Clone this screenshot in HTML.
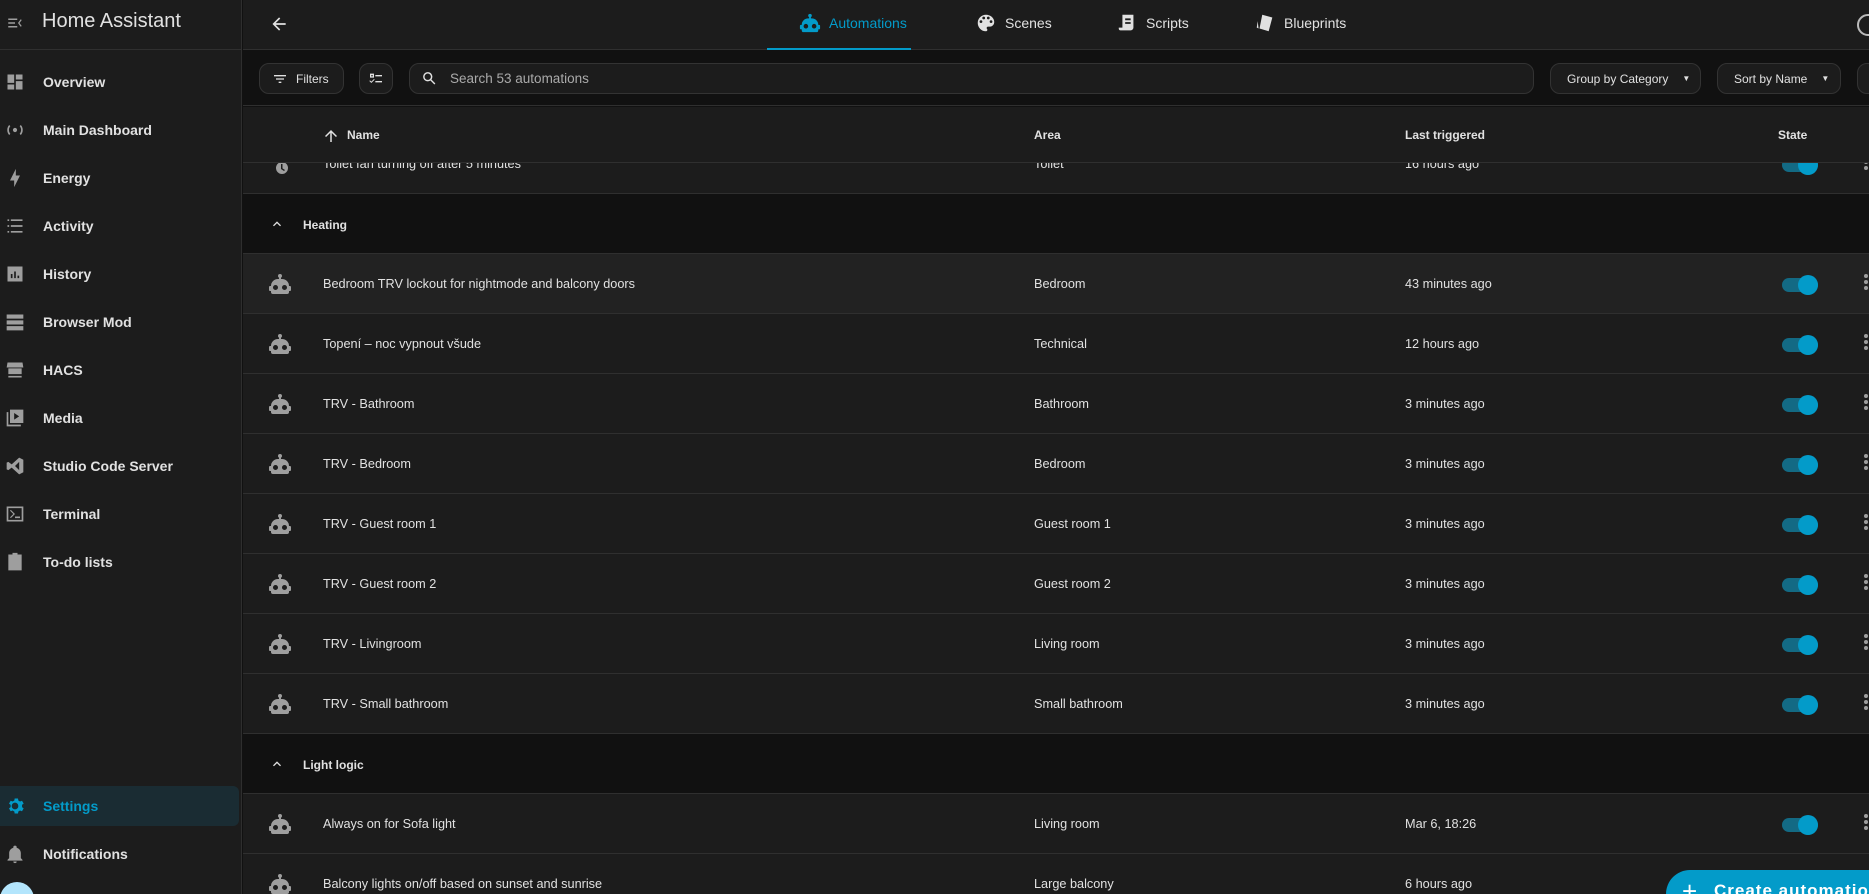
<!DOCTYPE html>
<html style="overflow:hidden;width:1869px;height:894px"><head><meta charset="utf-8"><style>
*{box-sizing:border-box;margin:0;padding:0}
html,body{width:1869px;height:894px;overflow:hidden;background:#111}
#wrap{position:relative;width:1869px;height:894px;overflow:hidden;font-family:"Liberation Sans",sans-serif;color:#e1e1e1;background:#111}
.abs{position:absolute}
#side{left:0;top:0;width:242px;height:894px;background:#1c1c1c;border-right:1px solid #2e2e2e}
.si{position:absolute;left:0;width:240px;height:40px;display:flex;align-items:center;font-size:14px;font-weight:bold;color:#e1e1e1}
.si svg{position:absolute;left:5px;width:20px;height:20px;fill:#9e9e9e}
.si span{position:absolute;left:43px}
#top{left:243px;top:0;width:1626px;height:50px;background:#1c1c1c;border-bottom:1px solid #2f2f2f}
.tab{position:absolute;top:12px;font-size:14px;color:#e1e1e1;display:flex;align-items:center;gap:8px}
.tab svg{width:22px;height:22px;fill:#e1e1e1}
.btn{position:absolute;top:63px;height:31px;border:1px solid #333;border-radius:10px;background:#1c1c1c;font-size:12px;color:#e1e1e1;display:flex;align-items:center}
.row{position:absolute;left:243px;width:1626px;height:60px;background:#1c1c1c;border-bottom:1px solid #2f2f2f;font-size:12.7px;color:#e1e1e1}
.row>*{position:absolute;top:23px}
.row .ic{left:25px;top:18px;width:24px;height:24px;fill:#9e9e9e}
.grp{position:absolute;left:243px;width:1626px;height:60px;background:#111;border-bottom:1px solid #2f2f2f;font-size:12px;font-weight:bold}
.tg{position:absolute;left:1539px;top:24px;width:36px;height:14px;border-radius:7px;background:#136a84}
.tg::after{content:"";position:absolute;left:16px;top:-3px;width:20px;height:20px;border-radius:50%;background:#039bc9}
.kb{position:absolute;left:1621px;top:20px;width:4px}
.kb i{display:block;width:4px;height:4px;border-radius:50%;background:#9e9e9e;margin-bottom:2px}
</style></head><body><div id="wrap">
<div id="side" class="abs">
 <div class="abs" style="left:0;top:0;width:242px;height:50px;border-bottom:1px solid #2f2f2f"></div>
 <svg class="abs" style="left:6px;top:14px;width:18px;height:18px" viewBox="0 0 24 24" fill="#9e9e9e"><path d="M3 6h12v2H3zM3 11h9v2H3zM3 16h12v2H3zM21 8l-3 4 3 4-1.4 1L16 12l3.6-5z"/></svg>
 <div class="abs" style="left:42px;top:10px;font-size:20px;color:#e1e1e1">Home Assistant</div>
 <div class="si" style="top:62px"><svg viewBox="0 0 24 24"><path d="M3 3h8v10H3zM13 3h8v6h-8zM13 11h8v10h-8zM3 15h8v6H3z"/></svg><span>Overview</span></div>
 <div class="si" style="top:110px"><svg viewBox="0 0 24 24"><circle cx="12" cy="12" r="2.5"/><path d="M5 6a9 9 0 0 0 0 12l1.4-1.4a7 7 0 0 1 0-9.2zM19 6l-1.4 1.4a7 7 0 0 1 0 9.2L19 18a9 9 0 0 0 0-12z"/></svg><span>Main Dashboard</span></div>
 <div class="si" style="top:158px"><svg viewBox="0 0 24 24"><path d="M11 15H6l7-14v8h5l-7 14z"/></svg><span>Energy</span></div>
 <div class="si" style="top:206px"><svg viewBox="0 0 24 24"><path d="M3 4h2v2H3zM7 4h14v2H7zM3 11h2v2H3zM7 11h14v2H7zM3 18h2v2H3zM7 18h14v2H7z"/></svg><span>Activity</span></div>
 <div class="si" style="top:254px"><svg viewBox="0 0 24 24"><path d="M3 3h18v18H3zM7 12v5h2v-5zM11 9v8h2V9zM15 14v3h2v-3z"/></svg><span>History</span></div>
 <div class="si" style="top:302px"><svg viewBox="0 0 24 24"><path d="M2 3h20v5H2zM2 10h20v5H2zM2 17h20v5H2z"/></svg><span>Browser Mod</span></div>
 <div class="si" style="top:350px"><svg viewBox="0 0 24 24"><path d="M3 3h18l1 6H2zM4 10h16v7H4zM4 19h16v2H4z"/></svg><span>HACS</span></div>
 <div class="si" style="top:398px"><svg viewBox="0 0 24 24"><path d="M2 5h2v15h15v2H2zM6 2h16v16H6zM11 6v8l6-4z"/></svg><span>Media</span></div>
 <div class="si" style="top:446px"><svg viewBox="0 0 24 24"><path d="M17 2l5 2.5v15L17 22l-9-8-4 3-2-1V8l2-1 4 3zM17 7l-5 5 5 5z"/></svg><span>Studio Code Server</span></div>
 <div class="si" style="top:494px"><svg viewBox="0 0 24 24"><path d="M2 3h20v18H2zM4 5v14h16V5zM6 8l4 4-4 4 1 1 5-5-5-5zM12 15h6v2h-6z"/></svg><span>Terminal</span></div>
 <div class="si" style="top:542px"><svg viewBox="0 0 24 24"><path d="M4 3h16v19H4zM9 1h6v4H9zM7 9h2v2H7zM11 9h6v2h-6zM7 14h2v2H7zM11 14h6v2h-6z"/></svg><span>To-do lists</span></div>
 <div class="abs" style="left:0;top:786px;width:239px;height:40px;background:#1a2c33;border-radius:0 6px 6px 0"></div>
 <div class="si" style="top:786px;color:#039bc9"><svg viewBox="0 0 24 24" style="fill:#039bc9"><path d="M12 8a4 4 0 1 0 0 8 4 4 0 0 0 0-8zm8.4 5.3l2 1.6-2 3.4-2.4-.9a8 8 0 0 1-2 1.2L15.6 21h-4l-.4-2.4a8 8 0 0 1-2-1.2l-2.4.9-2-3.4 2-1.6a8 8 0 0 1 0-2.6l-2-1.6 2-3.4 2.4.9a8 8 0 0 1 2-1.2L11.6 3h4l.4 2.4a8 8 0 0 1 2 1.2l2.4-.9 2 3.4-2 1.6a8 8 0 0 1 0 2.6z"/></svg><span>Settings</span></div>
 <div class="si" style="top:834px"><svg viewBox="0 0 24 24"><path d="M21 19v1H3v-1l2-2v-6c0-3 2-5.7 5-6.5V4a2 2 0 0 1 4 0v.5c3 .8 5 3.5 5 6.5v6zM14 21a2 2 0 0 1-4 0z"/></svg><span>Notifications</span></div>
 <div class="abs" style="left:0;top:882px;width:34px;height:34px;border-radius:50%;background:#b3e5fc"></div>
</div>

<div class="row" style="top:134px"><svg class="ic" viewBox="0 0 24 24"><path d="M3 5h9l2 3H6zM14 10a6 6 0 1 1 0 12 6 6 0 0 1 0-12zm-1 2v5l3 2 1-1-2.5-1.6V12z"/></svg><span style="left:80px">Toilet fan turning off after 5 minutes</span><span style="left:791px">Toilet</span><span style="left:1162px">16 hours ago</span><div class="tg"></div><div class="kb"><i></i><i></i><i></i></div></div>

<div class="abs" style="left:243px;top:50px;width:1626px;height:56px;background:#111;border-bottom:1px solid #2f2f2f;z-index:2"></div>
<div class="btn" style="left:259px;width:85px;z-index:3"><svg style="margin-left:12px;width:16px;height:16px" viewBox="0 0 24 24" fill="#e1e1e1"><path d="M3 6h18v2H3zM6 11h12v2H6zM10 16h4v2h-4z"/></svg><span style="margin-left:8px">Filters</span></div>
<div class="btn" style="left:359px;width:34px;z-index:3"><svg style="margin-left:8px;width:16px;height:16px" viewBox="0 0 24 24" fill="#e1e1e1"><path d="M3 4h6v6H3zm2 2v2h2V6zM11 6h10v2H11zM3 14l2 2 4-4 1 1-5 5-3-3zM11 15h10v2H11z"/></svg></div>
<div class="btn" style="left:409px;width:1125px;z-index:3;color:#aaa;font-size:13.5px"><svg style="margin-left:11px;width:17px;height:17px" viewBox="0 0 24 24" fill="#e1e1e1"><path d="M9.5 3a6.5 6.5 0 0 1 5.2 10.4l5.6 5.6-1.4 1.4-5.6-5.6A6.5 6.5 0 1 1 9.5 3zm0 2a4.5 4.5 0 1 0 0 9 4.5 4.5 0 0 0 0-9z"/></svg><span style="margin-left:12px">Search 53 automations</span></div>
<div class="btn" style="left:1550px;width:151px;z-index:3"><span style="margin-left:16px">Group by Category</span><span style="margin-left:14px;font-size:8px">▼</span></div>
<div class="btn" style="left:1717px;width:124px;z-index:3"><span style="margin-left:16px">Sort by Name</span><span style="margin-left:14px;font-size:8px">▼</span></div>
<div class="btn" style="left:1857px;width:40px;z-index:3"></div>

<div class="abs" style="left:243px;top:107px;width:1626px;height:56px;background:#1c1c1c;border-bottom:1px solid #2f2f2f;z-index:2;font-size:12px;font-weight:bold">
 <svg class="abs" style="left:79px;top:20px;width:18px;height:18px" viewBox="0 0 24 24" fill="#e1e1e1"><path d="M11 20V7.8l-5.6 5.6L4 12l8-8 8 8-1.4 1.4L13 7.8V20z"/></svg>
 <span class="abs" style="left:104px;top:21px">Name</span>
 <span class="abs" style="left:791px;top:21px">Area</span>
 <span class="abs" style="left:1162px;top:21px">Last triggered</span>
 <span class="abs" style="left:1535px;top:21px">State</span>
</div>

<div class="grp" style="top:194px"><svg class="abs" style="left:26px;top:22px;width:16px;height:16px" viewBox="0 0 24 24" fill="#e1e1e1"><path d="M7.4 15.4L12 10.8l4.6 4.6L18 14l-6-6-6 6z"/></svg><span class="abs" style="left:60px;top:24px">Heating</span></div>

<div class="row" style="top:254px;background:#222"><svg class="ic" viewBox="0 0 24 24"><path id="rb" d="M12,2A2,2 0 0,1 14,4C14,4.74 13.6,5.39 13,5.73V7H14A7,7 0 0,1 21,14H22A1,1 0 0,1 23,15V18A1,1 0 0,1 22,19H21V20A2,2 0 0,1 19,22H5A2,2 0 0,1 3,20V19H2A1,1 0 0,1 1,18V15A1,1 0 0,1 2,14H3A7,7 0 0,1 10,7H11V5.73C10.4,5.39 10,4.74 10,4A2,2 0 0,1 12,2M7.5,13A2.5,2.5 0 0,0 5,15.5A2.5,2.5 0 0,0 7.5,18A2.5,2.5 0 0,0 10,15.5A2.5,2.5 0 0,0 7.5,13M16.5,13A2.5,2.5 0 0,0 14,15.5A2.5,2.5 0 0,0 16.5,18A2.5,2.5 0 0,0 19,15.5A2.5,2.5 0 0,0 16.5,13Z"/></svg><span style="left:80px">Bedroom TRV lockout for nightmode and balcony doors</span><span style="left:791px">Bedroom</span><span style="left:1162px">43 minutes ago</span><div class="tg"></div><div class="kb"><i></i><i></i><i></i></div></div>
<div class="row" style="top:314px"><svg class="ic" viewBox="0 0 24 24"><use href="#rb"/></svg><span style="left:80px">Topení – noc vypnout všude</span><span style="left:791px">Technical</span><span style="left:1162px">12 hours ago</span><div class="tg"></div><div class="kb"><i></i><i></i><i></i></div></div>
<div class="row" style="top:374px"><svg class="ic" viewBox="0 0 24 24"><use href="#rb"/></svg><span style="left:80px">TRV - Bathroom</span><span style="left:791px">Bathroom</span><span style="left:1162px">3 minutes ago</span><div class="tg"></div><div class="kb"><i></i><i></i><i></i></div></div>
<div class="row" style="top:434px"><svg class="ic" viewBox="0 0 24 24"><use href="#rb"/></svg><span style="left:80px">TRV - Bedroom</span><span style="left:791px">Bedroom</span><span style="left:1162px">3 minutes ago</span><div class="tg"></div><div class="kb"><i></i><i></i><i></i></div></div>
<div class="row" style="top:494px"><svg class="ic" viewBox="0 0 24 24"><use href="#rb"/></svg><span style="left:80px">TRV - Guest room 1</span><span style="left:791px">Guest room 1</span><span style="left:1162px">3 minutes ago</span><div class="tg"></div><div class="kb"><i></i><i></i><i></i></div></div>
<div class="row" style="top:554px"><svg class="ic" viewBox="0 0 24 24"><use href="#rb"/></svg><span style="left:80px">TRV - Guest room 2</span><span style="left:791px">Guest room 2</span><span style="left:1162px">3 minutes ago</span><div class="tg"></div><div class="kb"><i></i><i></i><i></i></div></div>
<div class="row" style="top:614px"><svg class="ic" viewBox="0 0 24 24"><use href="#rb"/></svg><span style="left:80px">TRV - Livingroom</span><span style="left:791px">Living room</span><span style="left:1162px">3 minutes ago</span><div class="tg"></div><div class="kb"><i></i><i></i><i></i></div></div>
<div class="row" style="top:674px"><svg class="ic" viewBox="0 0 24 24"><use href="#rb"/></svg><span style="left:80px">TRV - Small bathroom</span><span style="left:791px">Small bathroom</span><span style="left:1162px">3 minutes ago</span><div class="tg"></div><div class="kb"><i></i><i></i><i></i></div></div>
<div class="grp" style="top:734px"><svg class="abs" style="left:26px;top:22px;width:16px;height:16px" viewBox="0 0 24 24" fill="#e1e1e1"><path d="M7.4 15.4L12 10.8l4.6 4.6L18 14l-6-6-6 6z"/></svg><span class="abs" style="left:60px;top:24px">Light logic</span></div>
<div class="row" style="top:794px"><svg class="ic" viewBox="0 0 24 24"><use href="#rb"/></svg><span style="left:80px">Always on for Sofa light</span><span style="left:791px">Living room</span><span style="left:1162px">Mar 6, 18:26</span><div class="tg"></div><div class="kb"><i></i><i></i><i></i></div></div>
<div class="row" style="top:854px;height:40px;border-bottom:none"><svg class="ic" viewBox="0 0 24 24"><use href="#rb"/></svg><span style="left:80px">Balcony lights on/off based on sunset and sunrise</span><span style="left:791px">Large balcony</span><span style="left:1162px">6 hours ago</span></div>

<div class="abs" style="left:1666px;top:870px;width:203px;height:24px;border-radius:30px 0 0 0;background:#039bc9;color:#fff;font-size:17px;font-weight:bold;letter-spacing:1px;z-index:4;overflow:hidden"><span class="abs" style="left:16px;top:6px;font-size:26px;font-weight:normal">+</span><span class="abs" style="left:48px;top:11px;white-space:nowrap">Create automation</span></div>

<div id="top" class="abs">
 <svg class="abs" style="left:26px;top:14px;width:20px;height:20px" viewBox="0 0 24 24" fill="#e1e1e1"><path d="M20 11v2H8l5.5 5.5-1.4 1.4L4.2 12l7.9-7.9 1.4 1.4L8 11z"/></svg>
 <div class="tab" style="left:556px;color:#039bc9"><svg viewBox="0 0 24 24" style="fill:#039bc9"><use href="#rb"/></svg>Automations</div>
 <div class="abs" style="left:524px;top:48px;width:144px;height:2px;background:#039bc9"></div>
 <div class="tab" style="left:732px"><svg viewBox="0 0 24 24"><path d="M12 3a9 9 0 0 0 0 18c.8 0 1.5-.7 1.5-1.5 0-.4-.1-.7-.4-1-.2-.3-.4-.6-.4-1 0-.8.7-1.5 1.5-1.5H16a5 5 0 0 0 5-5c0-4.4-4-8-9-8zM6.5 12a1.5 1.5 0 1 1 0-3 1.5 1.5 0 0 1 0 3zm3-4a1.5 1.5 0 1 1 0-3 1.5 1.5 0 0 1 0 3zm5 0a1.5 1.5 0 1 1 0-3 1.5 1.5 0 0 1 0 3zm3 4a1.5 1.5 0 1 1 0-3 1.5 1.5 0 0 1 0 3z"/></svg>Scenes</div>
 <div class="tab" style="left:873px"><svg viewBox="0 0 24 24"><path d="M7 3h12v14a3 3 0 0 1-3 3H5a2 2 0 0 1-2-2v-1h4zM10 7v2h6V7zm0 4v2h6v-2z"/></svg>Scripts</div>
 <div class="tab" style="left:1011px"><svg viewBox="0 0 24 24"><path d="M9 3l11 3-4 15-10-3zM4 10l1 8-2-1z"/></svg>Blueprints</div>
 <div class="abs" style="left:1614px;top:14px;width:22px;height:22px;border:2px solid #bbb;border-radius:50%"></div>
</div>
</div></body></html>
